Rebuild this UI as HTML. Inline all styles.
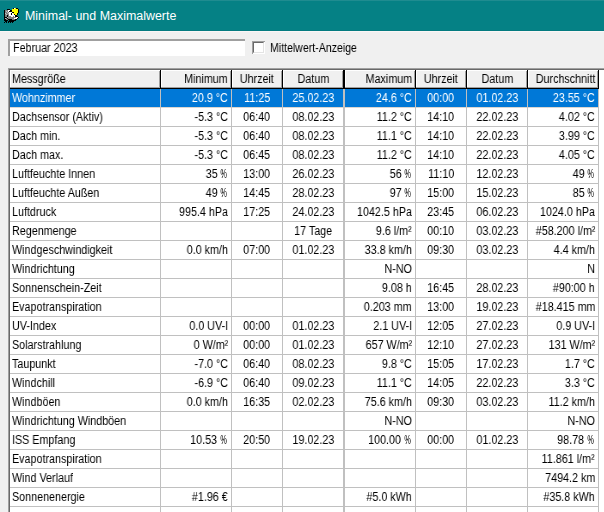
<!DOCTYPE html>
<html><head><meta charset="utf-8"><style>
*{margin:0;padding:0;box-sizing:border-box}
html,body{width:604px;height:512px;overflow:hidden;background:#f0f0f0}
body{position:relative;font-family:"Liberation Sans",sans-serif;font-size:12.5px;color:#000}
.a{position:absolute}
.t{position:absolute;white-space:nowrap;line-height:18px;height:18px}
.t span{display:inline-block;will-change:transform;transform:scaleX(0.86)}
.t span b{font-weight:normal;display:inline-block;width:9px;transform:scaleX(0.7);transform-origin:0 50%;will-change:transform}
.l span{transform-origin:0 50%}.r span{transform-origin:100% 50%}.c span{transform-origin:50% 50%}
.hl{color:#fff}
</style></head><body>

<div class="a" style="left:0;top:0;width:604px;height:31px;background:#058185"></div>
<div class="a" style="left:0;top:0;width:604px;height:1px;background:#1f8c90"></div>
<div class="a" style="left:0;top:30px;width:604px;height:1px;background:#047b80"></div>
<div class="a" style="left:0;top:31px;width:604px;height:1px;background:#fbf6f6"></div>
<svg class="a" style="left:4px;top:8px" width="16" height="15" viewBox="0 0 16 15" shape-rendering="crispEdges"><rect x="9" y="0" width="1" height="1" fill="#000"/><rect x="10" y="0" width="1" height="1" fill="#fff"/><rect x="11" y="0" width="1" height="1" fill="#ff0"/><rect x="12" y="0" width="1" height="1" fill="#000"/><rect x="13" y="0" width="1" height="1" fill="#000"/><rect x="3" y="1" width="1" height="1" fill="#000"/><rect x="4" y="1" width="1" height="1" fill="#000"/><rect x="5" y="1" width="1" height="1" fill="#000"/><rect x="8" y="1" width="1" height="1" fill="#ff0"/><rect x="9" y="1" width="1" height="1" fill="#ff0"/><rect x="10" y="1" width="1" height="1" fill="#ff0"/><rect x="11" y="1" width="1" height="1" fill="#ff0"/><rect x="12" y="1" width="1" height="1" fill="#ff0"/><rect x="13" y="1" width="1" height="1" fill="#ff0"/><rect x="14" y="1" width="1" height="1" fill="#000"/><rect x="0" y="2" width="1" height="1" fill="#000"/><rect x="1" y="2" width="1" height="1" fill="#808080"/><rect x="2" y="2" width="1" height="1" fill="#808080"/><rect x="3" y="2" width="1" height="1" fill="#808080"/><rect x="4" y="2" width="1" height="1" fill="#fff"/><rect x="5" y="2" width="1" height="1" fill="#fff"/><rect x="6" y="2" width="1" height="1" fill="#000"/><rect x="7" y="2" width="1" height="1" fill="#000"/><rect x="8" y="2" width="1" height="1" fill="#ff0"/><rect x="9" y="2" width="1" height="1" fill="#ff0"/><rect x="10" y="2" width="1" height="1" fill="#ff0"/><rect x="11" y="2" width="1" height="1" fill="#ff0"/><rect x="12" y="2" width="1" height="1" fill="#ff0"/><rect x="13" y="2" width="1" height="1" fill="#ff0"/><rect x="14" y="2" width="1" height="1" fill="#000"/><rect x="0" y="3" width="1" height="1" fill="#000"/><rect x="1" y="3" width="1" height="1" fill="#808080"/><rect x="2" y="3" width="1" height="1" fill="#c0c0c0"/><rect x="3" y="3" width="1" height="1" fill="#808080"/><rect x="4" y="3" width="1" height="1" fill="#fff"/><rect x="5" y="3" width="1" height="1" fill="#000"/><rect x="6" y="3" width="1" height="1" fill="#000"/><rect x="7" y="3" width="1" height="1" fill="#000"/><rect x="8" y="3" width="1" height="1" fill="#ff0"/><rect x="9" y="3" width="1" height="1" fill="#ff0"/><rect x="10" y="3" width="1" height="1" fill="#ff0"/><rect x="11" y="3" width="1" height="1" fill="#ff0"/><rect x="12" y="3" width="1" height="1" fill="#ff0"/><rect x="13" y="3" width="1" height="1" fill="#ff0"/><rect x="14" y="3" width="1" height="1" fill="#000"/><rect x="0" y="4" width="1" height="1" fill="#000"/><rect x="1" y="4" width="1" height="1" fill="#808080"/><rect x="2" y="4" width="1" height="1" fill="#808080"/><rect x="3" y="4" width="1" height="1" fill="#c0c0c0"/><rect x="4" y="4" width="1" height="1" fill="#808080"/><rect x="5" y="4" width="1" height="1" fill="#fff"/><rect x="6" y="4" width="1" height="1" fill="#fff"/><rect x="7" y="4" width="1" height="1" fill="#fff"/><rect x="8" y="4" width="1" height="1" fill="#000"/><rect x="9" y="4" width="1" height="1" fill="#000"/><rect x="10" y="4" width="1" height="1" fill="#ff0"/><rect x="11" y="4" width="1" height="1" fill="#ff0"/><rect x="12" y="4" width="1" height="1" fill="#ff0"/><rect x="13" y="4" width="1" height="1" fill="#ff0"/><rect x="14" y="4" width="1" height="1" fill="#000"/><rect x="0" y="5" width="1" height="1" fill="#000"/><rect x="1" y="5" width="1" height="1" fill="#c0c0c0"/><rect x="2" y="5" width="1" height="1" fill="#808080"/><rect x="3" y="5" width="1" height="1" fill="#808080"/><rect x="4" y="5" width="1" height="1" fill="#c0c0c0"/><rect x="5" y="5" width="1" height="1" fill="#fff"/><rect x="6" y="5" width="1" height="1" fill="#fff"/><rect x="7" y="5" width="1" height="1" fill="#000"/><rect x="8" y="5" width="1" height="1" fill="#fff"/><rect x="9" y="5" width="1" height="1" fill="#ff0"/><rect x="10" y="5" width="1" height="1" fill="#ff0"/><rect x="11" y="5" width="1" height="1" fill="#ff0"/><rect x="12" y="5" width="1" height="1" fill="#ff0"/><rect x="13" y="5" width="1" height="1" fill="#000"/><rect x="0" y="6" width="1" height="1" fill="#000"/><rect x="1" y="6" width="1" height="1" fill="#808080"/><rect x="2" y="6" width="1" height="1" fill="#c0c0c0"/><rect x="3" y="6" width="1" height="1" fill="#808080"/><rect x="4" y="6" width="1" height="1" fill="#808080"/><rect x="5" y="6" width="1" height="1" fill="#fff"/><rect x="6" y="6" width="1" height="1" fill="#fff"/><rect x="7" y="6" width="1" height="1" fill="#000"/><rect x="8" y="6" width="1" height="1" fill="#fff"/><rect x="9" y="6" width="1" height="1" fill="#fff"/><rect x="10" y="6" width="1" height="1" fill="#000"/><rect x="11" y="6" width="1" height="1" fill="#ff0"/><rect x="12" y="6" width="1" height="1" fill="#ff0"/><rect x="13" y="6" width="1" height="1" fill="#000"/><rect x="0" y="7" width="1" height="1" fill="#000"/><rect x="1" y="7" width="1" height="1" fill="#808080"/><rect x="2" y="7" width="1" height="1" fill="#808080"/><rect x="3" y="7" width="1" height="1" fill="#000"/><rect x="4" y="7" width="1" height="1" fill="#808080"/><rect x="5" y="7" width="1" height="1" fill="#fff"/><rect x="6" y="7" width="1" height="1" fill="#fff"/><rect x="7" y="7" width="1" height="1" fill="#fff"/><rect x="8" y="7" width="1" height="1" fill="#fff"/><rect x="9" y="7" width="1" height="1" fill="#fff"/><rect x="10" y="7" width="1" height="1" fill="#fff"/><rect x="11" y="7" width="1" height="1" fill="#000"/><rect x="12" y="7" width="1" height="1" fill="#000"/><rect x="0" y="8" width="1" height="1" fill="#000"/><rect x="1" y="8" width="1" height="1" fill="#808080"/><rect x="2" y="8" width="1" height="1" fill="#808080"/><rect x="3" y="8" width="1" height="1" fill="#000"/><rect x="4" y="8" width="1" height="1" fill="#808080"/><rect x="5" y="8" width="1" height="1" fill="#808080"/><rect x="6" y="8" width="1" height="1" fill="#808080"/><rect x="7" y="8" width="1" height="1" fill="#fff"/><rect x="8" y="8" width="1" height="1" fill="#fff"/><rect x="9" y="8" width="1" height="1" fill="#808080"/><rect x="10" y="8" width="1" height="1" fill="#fff"/><rect x="11" y="8" width="1" height="1" fill="#000"/><rect x="12" y="8" width="1" height="1" fill="#000"/><rect x="13" y="8" width="1" height="1" fill="#000"/><rect x="0" y="9" width="1" height="1" fill="#000"/><rect x="1" y="9" width="1" height="1" fill="#000"/><rect x="2" y="9" width="1" height="1" fill="#000"/><rect x="3" y="9" width="1" height="1" fill="#c0c0c0"/><rect x="4" y="9" width="1" height="1" fill="#808080"/><rect x="5" y="9" width="1" height="1" fill="#808080"/><rect x="6" y="9" width="1" height="1" fill="#808080"/><rect x="7" y="9" width="1" height="1" fill="#808080"/><rect x="8" y="9" width="1" height="1" fill="#808080"/><rect x="9" y="9" width="1" height="1" fill="#808080"/><rect x="10" y="9" width="1" height="1" fill="#808080"/><rect x="11" y="9" width="1" height="1" fill="#808080"/><rect x="12" y="9" width="1" height="1" fill="#fff"/><rect x="13" y="9" width="1" height="1" fill="#fff"/><rect x="14" y="9" width="1" height="1" fill="#000"/><rect x="0" y="10" width="1" height="1" fill="#000"/><rect x="1" y="10" width="1" height="1" fill="#c0c0c0"/><rect x="2" y="10" width="1" height="1" fill="#808080"/><rect x="3" y="10" width="1" height="1" fill="#000"/><rect x="4" y="10" width="1" height="1" fill="#808080"/><rect x="5" y="10" width="1" height="1" fill="#808080"/><rect x="6" y="10" width="1" height="1" fill="#808080"/><rect x="7" y="10" width="1" height="1" fill="#808080"/><rect x="8" y="10" width="1" height="1" fill="#808080"/><rect x="9" y="10" width="1" height="1" fill="#808080"/><rect x="10" y="10" width="1" height="1" fill="#fff"/><rect x="11" y="10" width="1" height="1" fill="#fff"/><rect x="12" y="10" width="1" height="1" fill="#fff"/><rect x="13" y="10" width="1" height="1" fill="#000"/><rect x="0" y="11" width="1" height="1" fill="#000"/><rect x="1" y="11" width="1" height="1" fill="#000"/><rect x="2" y="11" width="1" height="1" fill="#808080"/><rect x="3" y="11" width="1" height="1" fill="#808080"/><rect x="4" y="11" width="1" height="1" fill="#000"/><rect x="5" y="11" width="1" height="1" fill="#000"/><rect x="6" y="11" width="1" height="1" fill="#000"/><rect x="7" y="11" width="1" height="1" fill="#000"/><rect x="8" y="11" width="1" height="1" fill="#808080"/><rect x="9" y="11" width="1" height="1" fill="#808080"/><rect x="10" y="11" width="1" height="1" fill="#808080"/><rect x="11" y="11" width="1" height="1" fill="#000"/><rect x="12" y="11" width="1" height="1" fill="#000"/><rect x="0" y="12" width="1" height="1" fill="#000"/><rect x="1" y="12" width="1" height="1" fill="#000"/><rect x="2" y="12" width="1" height="1" fill="#000"/><rect x="3" y="12" width="1" height="1" fill="#000"/><rect x="5" y="12" width="1" height="1" fill="#000"/><rect x="6" y="12" width="1" height="1" fill="#000"/><rect x="7" y="12" width="1" height="1" fill="#000"/><rect x="8" y="12" width="1" height="1" fill="#000"/><rect x="9" y="12" width="1" height="1" fill="#000"/><rect x="10" y="12" width="1" height="1" fill="#000"/><rect x="11" y="12" width="1" height="1" fill="#000"/><rect x="1" y="13" width="1" height="1" fill="#000"/><rect x="2" y="13" width="1" height="1" fill="#000"/><rect x="4" y="13" width="1" height="1" fill="#000"/><rect x="5" y="13" width="1" height="1" fill="#000"/><rect x="6" y="13" width="1" height="1" fill="#000"/><rect x="7" y="13" width="1" height="1" fill="#000"/><rect x="8" y="13" width="1" height="1" fill="#000"/><rect x="9" y="13" width="1" height="1" fill="#000"/><rect x="0" y="14" width="1" height="1" fill="#000"/><rect x="2" y="14" width="1" height="1" fill="#000"/><rect x="4" y="14" width="1" height="1" fill="#000"/><rect x="6" y="14" width="1" height="1" fill="#000"/><rect x="8" y="14" width="1" height="1" fill="#000"/></svg>
<div class="t hl" style="left:25px;top:7px;font-size:12.45px;color:#fff">Minimal- und Maximalwerte</div>
<div class="a" style="left:8px;top:39px;width:237px;height:17px;background:#fff;border-top:2px solid #a0a0a0;border-left:2px solid #a0a0a0"></div>
<div class="t l" style="left:13px;top:39px"><span>Februar 2023</span></div>
<div class="a" style="left:252px;top:41px;width:13px;height:13px;background:#fff;border-top:1px solid #a0a0a0;border-left:1px solid #a0a0a0"></div>
<div class="a" style="left:253px;top:42px;width:11px;height:11px;background:#fff;border-top:1px solid #696969;border-left:1px solid #696969;border-right:1px solid #e3e3e3;border-bottom:1px solid #e3e3e3"></div>
<div class="t l" style="left:270px;top:39px"><span style="transform:scaleX(0.845)">Mittelwert-Anzeige</span></div>
<div class="a" style="left:8px;top:68px;width:596px;height:444px;background:#fff"></div>
<div class="a" style="left:8px;top:68px;width:596px;height:1px;background:#a0a0a0"></div>
<div class="a" style="left:8px;top:68px;width:1px;height:444px;background:#a0a0a0"></div>
<div class="a" style="left:9px;top:69px;width:595px;height:1px;background:#696969"></div>
<div class="a" style="left:9px;top:69px;width:1px;height:443px;background:#696969"></div>
<div class="a" style="left:10px;top:70px;width:589px;height:17px;background:#f0f0f0"></div>
<div class="a" style="left:10px;top:87px;width:589px;height:1px;background:#a0a0a0"></div>
<div class="a" style="left:10px;top:88px;width:589px;height:1px;background:#000"></div>
<div class="a" style="left:10px;top:70px;width:150px;height:1px;background:#fff"></div>
<div class="a" style="left:10px;top:70px;width:1px;height:17px;background:#fff"></div>
<div class="a" style="left:159px;top:71px;width:1px;height:16px;background:#a0a0a0"></div>
<div class="a" style="left:161px;top:70px;width:70px;height:1px;background:#fff"></div>
<div class="a" style="left:161px;top:70px;width:1px;height:17px;background:#fff"></div>
<div class="a" style="left:230px;top:71px;width:1px;height:16px;background:#a0a0a0"></div>
<div class="a" style="left:232px;top:70px;width:50px;height:1px;background:#fff"></div>
<div class="a" style="left:232px;top:70px;width:1px;height:17px;background:#fff"></div>
<div class="a" style="left:281px;top:71px;width:1px;height:16px;background:#a0a0a0"></div>
<div class="a" style="left:283px;top:70px;width:60px;height:1px;background:#fff"></div>
<div class="a" style="left:283px;top:70px;width:1px;height:17px;background:#fff"></div>
<div class="a" style="left:342px;top:71px;width:1px;height:16px;background:#a0a0a0"></div>
<div class="a" style="left:345px;top:70px;width:70px;height:1px;background:#fff"></div>
<div class="a" style="left:345px;top:70px;width:1px;height:17px;background:#fff"></div>
<div class="a" style="left:414px;top:71px;width:1px;height:16px;background:#a0a0a0"></div>
<div class="a" style="left:416px;top:70px;width:50px;height:1px;background:#fff"></div>
<div class="a" style="left:416px;top:70px;width:1px;height:17px;background:#fff"></div>
<div class="a" style="left:465px;top:71px;width:1px;height:16px;background:#a0a0a0"></div>
<div class="a" style="left:467px;top:70px;width:60px;height:1px;background:#fff"></div>
<div class="a" style="left:467px;top:70px;width:1px;height:17px;background:#fff"></div>
<div class="a" style="left:526px;top:71px;width:1px;height:16px;background:#a0a0a0"></div>
<div class="a" style="left:528px;top:70px;width:70px;height:1px;background:#fff"></div>
<div class="a" style="left:528px;top:70px;width:1px;height:17px;background:#fff"></div>
<div class="a" style="left:597px;top:71px;width:1px;height:16px;background:#a0a0a0"></div>
<div class="a" style="left:160px;top:70px;width:1px;height:19px;background:#000"></div>
<div class="a" style="left:231px;top:70px;width:1px;height:19px;background:#000"></div>
<div class="a" style="left:282px;top:70px;width:1px;height:19px;background:#000"></div>
<div class="a" style="left:343px;top:70px;width:2px;height:19px;background:#000"></div>
<div class="a" style="left:415px;top:70px;width:1px;height:19px;background:#000"></div>
<div class="a" style="left:466px;top:70px;width:1px;height:19px;background:#000"></div>
<div class="a" style="left:527px;top:70px;width:1px;height:19px;background:#000"></div>
<div class="a" style="left:598px;top:70px;width:1px;height:19px;background:#000"></div>
<div class="a" style="left:599px;top:70px;width:5px;height:17px;background:#fff"></div>
<div class="t l" style="left:12px;top:70px"><span>Messgröße</span></div>
<div class="t r" style="right:376px;top:70px;text-align:right"><span>Minimum</span></div>
<div class="t c" style="left:232px;top:70px;width:50px;text-align:center"><span>Uhrzeit</span></div>
<div class="t c" style="left:283px;top:70px;width:60px;text-align:center"><span>Datum</span></div>
<div class="t r" style="right:192px;top:70px;text-align:right"><span>Maximum</span></div>
<div class="t c" style="left:416px;top:70px;width:50px;text-align:center"><span>Uhrzeit</span></div>
<div class="t c" style="left:467px;top:70px;width:60px;text-align:center"><span>Datum</span></div>
<div class="t r" style="right:9px;top:70px;text-align:right"><span>Durchschnitt</span></div>
<div class="a" style="left:10px;top:89px;width:588px;height:18px;background:#0078d7"></div>
<div class="a" style="left:10px;top:107px;width:589px;height:1px;background:#dad6d2"></div>
<div class="t l hl" style="left:12px;top:89px"><span>Wohnzimmer</span></div>
<div class="t r hl" style="right:376px;top:89px;text-align:right"><span>20.9 °C</span></div>
<div class="t c hl" style="left:232px;top:89px;width:50px;text-align:center"><span>11:25</span></div>
<div class="t c hl" style="left:283px;top:89px;width:60px;text-align:center"><span>25.02.23</span></div>
<div class="t r hl" style="right:192px;top:89px;text-align:right"><span>24.6 °C</span></div>
<div class="t c hl" style="left:416px;top:89px;width:50px;text-align:center"><span>00:00</span></div>
<div class="t c hl" style="left:467px;top:89px;width:60px;text-align:center"><span>01.02.23</span></div>
<div class="t r hl" style="right:9px;top:89px;text-align:right"><span>23.55 °C</span></div>
<div class="a" style="left:10px;top:126px;width:589px;height:1px;background:#c0c0c0"></div>
<div class="t l" style="left:12px;top:108px"><span>Dachsensor (Aktiv)</span></div>
<div class="t r" style="right:376px;top:108px;text-align:right"><span>-5.3 °C</span></div>
<div class="t c" style="left:232px;top:108px;width:50px;text-align:center"><span>06:40</span></div>
<div class="t c" style="left:283px;top:108px;width:60px;text-align:center"><span>08.02.23</span></div>
<div class="t r" style="right:192px;top:108px;text-align:right"><span>11.2 °C</span></div>
<div class="t c" style="left:416px;top:108px;width:50px;text-align:center"><span>14:10</span></div>
<div class="t c" style="left:467px;top:108px;width:60px;text-align:center"><span>22.02.23</span></div>
<div class="t r" style="right:9px;top:108px;text-align:right"><span>4.02 °C</span></div>
<div class="a" style="left:10px;top:145px;width:589px;height:1px;background:#c0c0c0"></div>
<div class="t l" style="left:12px;top:127px"><span>Dach min.</span></div>
<div class="t r" style="right:376px;top:127px;text-align:right"><span>-5.3 °C</span></div>
<div class="t c" style="left:232px;top:127px;width:50px;text-align:center"><span>06:40</span></div>
<div class="t c" style="left:283px;top:127px;width:60px;text-align:center"><span>08.02.23</span></div>
<div class="t r" style="right:192px;top:127px;text-align:right"><span>11.1 °C</span></div>
<div class="t c" style="left:416px;top:127px;width:50px;text-align:center"><span>14:10</span></div>
<div class="t c" style="left:467px;top:127px;width:60px;text-align:center"><span>22.02.23</span></div>
<div class="t r" style="right:9px;top:127px;text-align:right"><span>3.99 °C</span></div>
<div class="a" style="left:10px;top:164px;width:589px;height:1px;background:#c0c0c0"></div>
<div class="t l" style="left:12px;top:146px"><span>Dach max.</span></div>
<div class="t r" style="right:376px;top:146px;text-align:right"><span>-5.3 °C</span></div>
<div class="t c" style="left:232px;top:146px;width:50px;text-align:center"><span>06:45</span></div>
<div class="t c" style="left:283px;top:146px;width:60px;text-align:center"><span>08.02.23</span></div>
<div class="t r" style="right:192px;top:146px;text-align:right"><span>11.2 °C</span></div>
<div class="t c" style="left:416px;top:146px;width:50px;text-align:center"><span>14:10</span></div>
<div class="t c" style="left:467px;top:146px;width:60px;text-align:center"><span>22.02.23</span></div>
<div class="t r" style="right:9px;top:146px;text-align:right"><span>4.05 °C</span></div>
<div class="a" style="left:10px;top:183px;width:589px;height:1px;background:#c0c0c0"></div>
<div class="t l" style="left:12px;top:165px"><span>Luftfeuchte Innen</span></div>
<div class="t r" style="right:376px;top:165px;text-align:right"><span>35 <b>%</b></span></div>
<div class="t c" style="left:232px;top:165px;width:50px;text-align:center"><span>13:00</span></div>
<div class="t c" style="left:283px;top:165px;width:60px;text-align:center"><span>26.02.23</span></div>
<div class="t r" style="right:192px;top:165px;text-align:right"><span>56 <b>%</b></span></div>
<div class="t c" style="left:416px;top:165px;width:50px;text-align:center"><span>11:10</span></div>
<div class="t c" style="left:467px;top:165px;width:60px;text-align:center"><span>12.02.23</span></div>
<div class="t r" style="right:9px;top:165px;text-align:right"><span>49 <b>%</b></span></div>
<div class="a" style="left:10px;top:202px;width:589px;height:1px;background:#c0c0c0"></div>
<div class="t l" style="left:12px;top:184px"><span>Luftfeuchte Außen</span></div>
<div class="t r" style="right:376px;top:184px;text-align:right"><span>49 <b>%</b></span></div>
<div class="t c" style="left:232px;top:184px;width:50px;text-align:center"><span>14:45</span></div>
<div class="t c" style="left:283px;top:184px;width:60px;text-align:center"><span>28.02.23</span></div>
<div class="t r" style="right:192px;top:184px;text-align:right"><span>97 <b>%</b></span></div>
<div class="t c" style="left:416px;top:184px;width:50px;text-align:center"><span>15:00</span></div>
<div class="t c" style="left:467px;top:184px;width:60px;text-align:center"><span>15.02.23</span></div>
<div class="t r" style="right:9px;top:184px;text-align:right"><span>85 <b>%</b></span></div>
<div class="a" style="left:10px;top:221px;width:589px;height:1px;background:#c0c0c0"></div>
<div class="t l" style="left:12px;top:203px"><span>Luftdruck</span></div>
<div class="t r" style="right:376px;top:203px;text-align:right"><span>995.4 hPa</span></div>
<div class="t c" style="left:232px;top:203px;width:50px;text-align:center"><span>17:25</span></div>
<div class="t c" style="left:283px;top:203px;width:60px;text-align:center"><span>24.02.23</span></div>
<div class="t r" style="right:192px;top:203px;text-align:right"><span>1042.5 hPa</span></div>
<div class="t c" style="left:416px;top:203px;width:50px;text-align:center"><span>23:45</span></div>
<div class="t c" style="left:467px;top:203px;width:60px;text-align:center"><span>06.02.23</span></div>
<div class="t r" style="right:9px;top:203px;text-align:right"><span>1024.0 hPa</span></div>
<div class="a" style="left:10px;top:240px;width:589px;height:1px;background:#c0c0c0"></div>
<div class="t l" style="left:12px;top:222px"><span>Regenmenge</span></div>
<div class="t c" style="left:283px;top:222px;width:60px;text-align:center"><span>17 Tage</span></div>
<div class="t r" style="right:192px;top:222px;text-align:right"><span>9.6 l/m²</span></div>
<div class="t c" style="left:416px;top:222px;width:50px;text-align:center"><span>00:10</span></div>
<div class="t c" style="left:467px;top:222px;width:60px;text-align:center"><span>03.02.23</span></div>
<div class="t r" style="right:9px;top:222px;text-align:right"><span>#58.200 l/m²</span></div>
<div class="a" style="left:10px;top:259px;width:589px;height:1px;background:#c0c0c0"></div>
<div class="t l" style="left:12px;top:241px"><span>Windgeschwindigkeit</span></div>
<div class="t r" style="right:376px;top:241px;text-align:right"><span>0.0 km/h</span></div>
<div class="t c" style="left:232px;top:241px;width:50px;text-align:center"><span>07:00</span></div>
<div class="t c" style="left:283px;top:241px;width:60px;text-align:center"><span>01.02.23</span></div>
<div class="t r" style="right:192px;top:241px;text-align:right"><span>33.8 km/h</span></div>
<div class="t c" style="left:416px;top:241px;width:50px;text-align:center"><span>09:30</span></div>
<div class="t c" style="left:467px;top:241px;width:60px;text-align:center"><span>03.02.23</span></div>
<div class="t r" style="right:9px;top:241px;text-align:right"><span>4.4 km/h</span></div>
<div class="a" style="left:10px;top:278px;width:589px;height:1px;background:#c0c0c0"></div>
<div class="t l" style="left:12px;top:260px"><span>Windrichtung</span></div>
<div class="t r" style="right:192px;top:260px;text-align:right"><span>N-NO</span></div>
<div class="t r" style="right:9px;top:260px;text-align:right"><span>N</span></div>
<div class="a" style="left:10px;top:297px;width:589px;height:1px;background:#c0c0c0"></div>
<div class="t l" style="left:12px;top:279px"><span>Sonnenschein-Zeit</span></div>
<div class="t r" style="right:192px;top:279px;text-align:right"><span>9.08 h</span></div>
<div class="t c" style="left:416px;top:279px;width:50px;text-align:center"><span>16:45</span></div>
<div class="t c" style="left:467px;top:279px;width:60px;text-align:center"><span>28.02.23</span></div>
<div class="t r" style="right:9px;top:279px;text-align:right"><span>#90:00 h</span></div>
<div class="a" style="left:10px;top:316px;width:589px;height:1px;background:#c0c0c0"></div>
<div class="t l" style="left:12px;top:298px"><span>Evapotranspiration</span></div>
<div class="t r" style="right:192px;top:298px;text-align:right"><span>0.203 mm</span></div>
<div class="t c" style="left:416px;top:298px;width:50px;text-align:center"><span>13:00</span></div>
<div class="t c" style="left:467px;top:298px;width:60px;text-align:center"><span>19.02.23</span></div>
<div class="t r" style="right:9px;top:298px;text-align:right"><span>#18.415 mm</span></div>
<div class="a" style="left:10px;top:335px;width:589px;height:1px;background:#c0c0c0"></div>
<div class="t l" style="left:12px;top:317px"><span>UV-Index</span></div>
<div class="t r" style="right:376px;top:317px;text-align:right"><span>0.0 UV-I</span></div>
<div class="t c" style="left:232px;top:317px;width:50px;text-align:center"><span>00:00</span></div>
<div class="t c" style="left:283px;top:317px;width:60px;text-align:center"><span>01.02.23</span></div>
<div class="t r" style="right:192px;top:317px;text-align:right"><span>2.1 UV-I</span></div>
<div class="t c" style="left:416px;top:317px;width:50px;text-align:center"><span>12:05</span></div>
<div class="t c" style="left:467px;top:317px;width:60px;text-align:center"><span>27.02.23</span></div>
<div class="t r" style="right:9px;top:317px;text-align:right"><span>0.9 UV-I</span></div>
<div class="a" style="left:10px;top:354px;width:589px;height:1px;background:#c0c0c0"></div>
<div class="t l" style="left:12px;top:336px"><span>Solarstrahlung</span></div>
<div class="t r" style="right:376px;top:336px;text-align:right"><span>0 W/m²</span></div>
<div class="t c" style="left:232px;top:336px;width:50px;text-align:center"><span>00:00</span></div>
<div class="t c" style="left:283px;top:336px;width:60px;text-align:center"><span>01.02.23</span></div>
<div class="t r" style="right:192px;top:336px;text-align:right"><span>657 W/m²</span></div>
<div class="t c" style="left:416px;top:336px;width:50px;text-align:center"><span>12:10</span></div>
<div class="t c" style="left:467px;top:336px;width:60px;text-align:center"><span>27.02.23</span></div>
<div class="t r" style="right:9px;top:336px;text-align:right"><span>131 W/m²</span></div>
<div class="a" style="left:10px;top:373px;width:589px;height:1px;background:#c0c0c0"></div>
<div class="t l" style="left:12px;top:355px"><span>Taupunkt</span></div>
<div class="t r" style="right:376px;top:355px;text-align:right"><span>-7.0 °C</span></div>
<div class="t c" style="left:232px;top:355px;width:50px;text-align:center"><span>06:40</span></div>
<div class="t c" style="left:283px;top:355px;width:60px;text-align:center"><span>08.02.23</span></div>
<div class="t r" style="right:192px;top:355px;text-align:right"><span>9.8 °C</span></div>
<div class="t c" style="left:416px;top:355px;width:50px;text-align:center"><span>15:05</span></div>
<div class="t c" style="left:467px;top:355px;width:60px;text-align:center"><span>17.02.23</span></div>
<div class="t r" style="right:9px;top:355px;text-align:right"><span>1.7 °C</span></div>
<div class="a" style="left:10px;top:392px;width:589px;height:1px;background:#c0c0c0"></div>
<div class="t l" style="left:12px;top:374px"><span>Windchill</span></div>
<div class="t r" style="right:376px;top:374px;text-align:right"><span>-6.9 °C</span></div>
<div class="t c" style="left:232px;top:374px;width:50px;text-align:center"><span>06:40</span></div>
<div class="t c" style="left:283px;top:374px;width:60px;text-align:center"><span>09.02.23</span></div>
<div class="t r" style="right:192px;top:374px;text-align:right"><span>11.1 °C</span></div>
<div class="t c" style="left:416px;top:374px;width:50px;text-align:center"><span>14:05</span></div>
<div class="t c" style="left:467px;top:374px;width:60px;text-align:center"><span>22.02.23</span></div>
<div class="t r" style="right:9px;top:374px;text-align:right"><span>3.3 °C</span></div>
<div class="a" style="left:10px;top:411px;width:589px;height:1px;background:#c0c0c0"></div>
<div class="t l" style="left:12px;top:393px"><span>Windböen</span></div>
<div class="t r" style="right:376px;top:393px;text-align:right"><span>0.0 km/h</span></div>
<div class="t c" style="left:232px;top:393px;width:50px;text-align:center"><span>16:35</span></div>
<div class="t c" style="left:283px;top:393px;width:60px;text-align:center"><span>02.02.23</span></div>
<div class="t r" style="right:192px;top:393px;text-align:right"><span>75.6 km/h</span></div>
<div class="t c" style="left:416px;top:393px;width:50px;text-align:center"><span>09:30</span></div>
<div class="t c" style="left:467px;top:393px;width:60px;text-align:center"><span>03.02.23</span></div>
<div class="t r" style="right:9px;top:393px;text-align:right"><span>11.2 km/h</span></div>
<div class="a" style="left:10px;top:430px;width:589px;height:1px;background:#c0c0c0"></div>
<div class="t l" style="left:12px;top:412px"><span>Windrichtung Windböen</span></div>
<div class="t r" style="right:192px;top:412px;text-align:right"><span>N-NO</span></div>
<div class="t r" style="right:9px;top:412px;text-align:right"><span>N-NO</span></div>
<div class="a" style="left:10px;top:449px;width:589px;height:1px;background:#c0c0c0"></div>
<div class="t l" style="left:12px;top:431px"><span>ISS Empfang</span></div>
<div class="t r" style="right:376px;top:431px;text-align:right"><span>10.53 <b>%</b></span></div>
<div class="t c" style="left:232px;top:431px;width:50px;text-align:center"><span>20:50</span></div>
<div class="t c" style="left:283px;top:431px;width:60px;text-align:center"><span>19.02.23</span></div>
<div class="t r" style="right:192px;top:431px;text-align:right"><span>100.00 <b>%</b></span></div>
<div class="t c" style="left:416px;top:431px;width:50px;text-align:center"><span>00:00</span></div>
<div class="t c" style="left:467px;top:431px;width:60px;text-align:center"><span>01.02.23</span></div>
<div class="t r" style="right:9px;top:431px;text-align:right"><span>98.78 <b>%</b></span></div>
<div class="a" style="left:10px;top:468px;width:589px;height:1px;background:#c0c0c0"></div>
<div class="t l" style="left:12px;top:450px"><span>Evapotranspiration</span></div>
<div class="t r" style="right:9px;top:450px;text-align:right"><span>11.861 l/m²</span></div>
<div class="a" style="left:10px;top:487px;width:589px;height:1px;background:#c0c0c0"></div>
<div class="t l" style="left:12px;top:469px"><span>Wind Verlauf</span></div>
<div class="t r" style="right:9px;top:469px;text-align:right"><span>7494.2 km</span></div>
<div class="a" style="left:10px;top:506px;width:589px;height:1px;background:#c0c0c0"></div>
<div class="t l" style="left:12px;top:488px"><span>Sonnenenergie</span></div>
<div class="t r" style="right:376px;top:488px;text-align:right"><span>#1.96 €</span></div>
<div class="t r" style="right:192px;top:488px;text-align:right"><span>#5.0 kWh</span></div>
<div class="t r" style="right:9px;top:488px;text-align:right"><span>#35.8 kWh</span></div>
<div class="a" style="left:160px;top:89px;width:1px;height:423px;background:#c0c0c0"></div>
<div class="a" style="left:231px;top:89px;width:1px;height:423px;background:#c0c0c0"></div>
<div class="a" style="left:282px;top:89px;width:1px;height:423px;background:#c0c0c0"></div>
<div class="a" style="left:343px;top:89px;width:2px;height:423px;background:#c0c0c0"></div>
<div class="a" style="left:415px;top:89px;width:1px;height:423px;background:#c0c0c0"></div>
<div class="a" style="left:466px;top:89px;width:1px;height:423px;background:#c0c0c0"></div>
<div class="a" style="left:527px;top:89px;width:1px;height:423px;background:#c0c0c0"></div>
<div class="a" style="left:598px;top:89px;width:1px;height:423px;background:#c0c0c0"></div>
</body></html>
